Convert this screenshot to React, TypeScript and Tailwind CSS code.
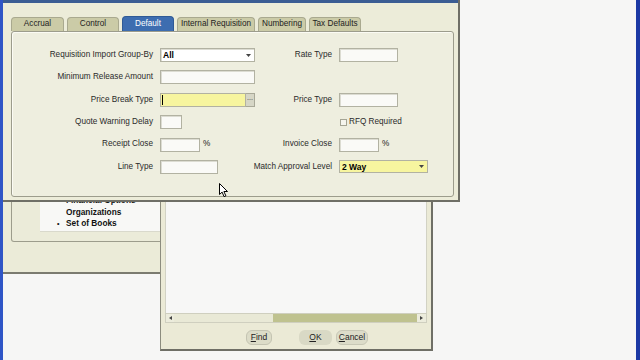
import React from "react";

const TABS = [
  { label: "Accrual", w: "w-[53px]" },
  { label: "Control", w: "w-[52px]" },
  { label: "Default", w: "w-[52px]", active: true },
  { label: "Internal Requisition", w: "w-[78px]" },
  { label: "Numbering", w: "w-[48px]" },
  { label: "Tax Defaults", w: "w-[52px]" },
];

const inputCls =
  "h-[14px] border border-[#b2b2a2] bg-[#fafaf7] shadow-[inset_1px_1px_0_#dcdcd2]";

function Arrow() {
  return (
    <svg width="5" height="3" viewBox="0 0 5 3" className="mr-[3px]">
      <path d="M0 0h5L2.5 3z" fill="#444" />
    </svg>
  );
}

function Row({
  label,
  field,
  rightLabel,
  rightField,
}: {
  label?: string;
  field?: React.ReactNode;
  rightLabel?: string;
  rightField?: React.ReactNode;
}) {
  return (
    <div className="flex h-[14px] items-center">
      <div className="flex w-[141px] justify-end whitespace-nowrap text-[#2a2a2a]">{label}</div>
      <div className="ml-[7px] flex w-[102px] items-center">{field}</div>
      <div className="flex w-[70px] justify-end whitespace-nowrap text-[#2a2a2a]">{rightLabel}</div>
      <div className="ml-[7px] flex items-center">{rightField}</div>
    </div>
  );
}

function MainDialog() {
  return (
    <div className="absolute left-[3px] top-0 flex h-[202px] w-[457px] flex-col border-b-2 border-r-2 border-[#6f6f66] bg-[#ececd9]">
      <div className="h-[3px] bg-[#3b5d93]" />
      <div className="ml-[8px] mt-[13px] flex items-end gap-[3px]">
        {TABS.map((t) => (
          <div
            key={t.label}
            className={`${t.w} flex items-center justify-center whitespace-nowrap rounded-t-[4px] border border-b-0 ${
              t.active
                ? "h-[15px] border-[#2f5a96] bg-[#3d6db0] text-white"
                : "h-[14px] border-[#a9a98f] bg-[#cbcba7] text-[#222]"
            }`}
          >
            {t.label}
          </div>
        ))}
      </div>
      <div className="mb-[3px] ml-[8px] mr-[4px] flex flex-1 flex-col gap-[8.4px] rounded-[3px] border border-[#9c9c8c] bg-[#eeeedf] pt-[16px] shadow-[inset_1px_1px_0_#fbfbf4]">
        <Row
          label="Requisition Import Group-By"
          field={
            <div className={`${inputCls} flex w-[95px] items-center justify-between bg-white`}>
              <span className="pl-[2px] text-[8.5px] font-bold text-black">All</span>
              <Arrow />
            </div>
          }
          rightLabel="Rate Type"
          rightField={<div className={`${inputCls} w-[59px]`} />}
        />
        <Row
          label="Minimum Release Amount"
          field={<div className={`${inputCls} w-[95px]`} />}
        />
        <Row
          label="Price Break Type"
          field={
            <div className="flex">
              <div className="h-[14px] w-[86px] border border-[#b2b2a2] bg-[#f7f59f] pl-[1px]">
                <div className="mt-[1px] h-[10px] w-px bg-black" />
              </div>
              <div className="flex h-[14px] w-[9px] items-start justify-center border border-l-0 border-[#a8a898] bg-[#d6d6c6] text-[7px] leading-[8px] text-[#333]">
                ...
              </div>
            </div>
          }
          rightLabel="Price Type"
          rightField={<div className={`${inputCls} w-[59px]`} />}
        />
        <Row
          label="Quote Warning Delay"
          field={<div className={`${inputCls} w-[22px]`} />}
          rightField={
            <div className="ml-[1px] flex items-center gap-[2px]">
              <div className="h-[7px] w-[7px] border border-[#a4a494] bg-[#f5f5ee]" />
              <span className="text-[#2a2a2a]">RFQ Required</span>
            </div>
          }
        />
        <Row
          label="Receipt Close"
          field={
            <>
              <div className={`${inputCls} w-[40px]`} />
              <span className="ml-[3px]">%</span>
            </>
          }
          rightLabel="Invoice Close"
          rightField={
            <>
              <div className={`${inputCls} w-[40px]`} />
              <span className="ml-[3px]">%</span>
            </>
          }
        />
        <Row
          label="Line Type"
          field={<div className={`${inputCls} w-[58px]`} />}
          rightLabel="Match Approval Level"
          rightField={
            <div className="flex h-[13px] w-[89px] items-center justify-between border border-[#b2b2a2] bg-[#f7f59f]">
              <span className="pl-[2px] text-[8.5px] font-bold text-black">2 Way</span>
              <Arrow />
            </div>
          }
        />
      </div>
    </div>
  );
}

function NavWindow() {
  return (
    <div className="absolute left-[3px] top-[150px] flex h-[124px] w-[160px] flex-col border-b-2 border-[#7b7b70] bg-[#ebebd8]">
      <div className="ml-[8px] flex h-[92px] flex-col justify-end rounded-b-[3px] border border-t-0 border-[#9c9c8c] bg-[#ebebd9] pb-[9px]">
        <div className="ml-[28px] flex flex-col justify-end border-b border-[#d9d9cc] bg-[#f8f8f6] pb-[2px] text-[8.3px] font-bold text-[#111]">
          <div className="flex h-[11.5px] items-center pl-[26px]">Financial Options</div>
          <div className="flex h-[11.5px] items-center pl-[26px]">Organizations</div>
          <div className="flex h-[11.5px] items-center">
            <span className="w-[26px] pl-[17px] text-[7px]">•</span>
            Set of Books
          </div>
        </div>
      </div>
    </div>
  );
}

function FindWindow() {
  return (
    <div className="absolute left-[160px] top-[150px] flex h-[201px] w-[273px] flex-col border-b-2 border-l border-r-2 border-l-[#8c8c7e] border-b-[#6f6f66] border-r-[#6f6f66] bg-[#ebead6]">
      <div className="mx-[4px] flex flex-1 flex-col border-x border-[#d2d2c4] bg-[#f7f7f6]" />
      <div className="mx-[4px] flex h-[10px] items-stretch border border-[#cfcfbf]">
        <div className="flex w-[8px] items-center justify-center bg-[#ececdc]">
          <svg width="3" height="4" viewBox="0 0 3 4">
            <path d="M3 0v4L0 2z" fill="#444" />
          </svg>
        </div>
        <div className="w-[99px] bg-[#e9e9d6]" />
        <div className="flex-1 bg-[#bfc28f]" />
        <div className="flex w-[9px] items-center justify-center bg-[#ececdc]">
          <svg width="3" height="4" viewBox="0 0 3 4">
            <path d="M0 0v4l3-2z" fill="#444" />
          </svg>
        </div>
      </div>
      <div className="mb-[4px] mt-[7px] flex h-[15px] items-center text-[8.5px] text-[#222]">
        <div className="ml-[85px] flex h-[15px] w-[26px] items-center justify-center rounded-[6px] border border-[#c4c4b2] bg-[#dcdcc8]">
          <span><u>F</u>ind</span>
        </div>
        <div className="ml-[27px] flex h-[15px] w-[33px] items-center justify-center rounded-[6px] bg-[#d9d9c5]">
          <span><u>O</u>K</span>
        </div>
        <div className="ml-[4px] flex h-[15px] w-[32px] items-center justify-center rounded-[6px] border border-[#c8c8b6] bg-[#dcdcc9]">
          <span><u>C</u>ancel</span>
        </div>
      </div>
    </div>
  );
}

function Cursor() {
  return (
    <svg
      width="10"
      height="15"
      viewBox="0 0 10 15"
      className="absolute left-[219px] top-[183px]"
    >
      <path
        d="M0.5 0.5v11l2.6-2.4 2 4.6 1.8-.8-2-4.4h3.6z"
        fill="#fff"
        stroke="#000"
        strokeWidth="1"
      />
    </svg>
  );
}

export default function App() {
  return (
    <div className="relative h-[360px] w-[640px] overflow-hidden bg-[#f6f6f5] font-['Liberation_Sans',Arial,sans-serif] text-[8.2px] leading-none text-[#222]">
      <div className="absolute left-0 top-0 h-full w-[3px] bg-[#2f55c6]" />
      <div className="absolute right-0 top-0 h-full w-[4px] bg-[#1c39a4]" />
      <NavWindow />
      <FindWindow />
      <MainDialog />
      <Cursor />
    </div>
  );
}
